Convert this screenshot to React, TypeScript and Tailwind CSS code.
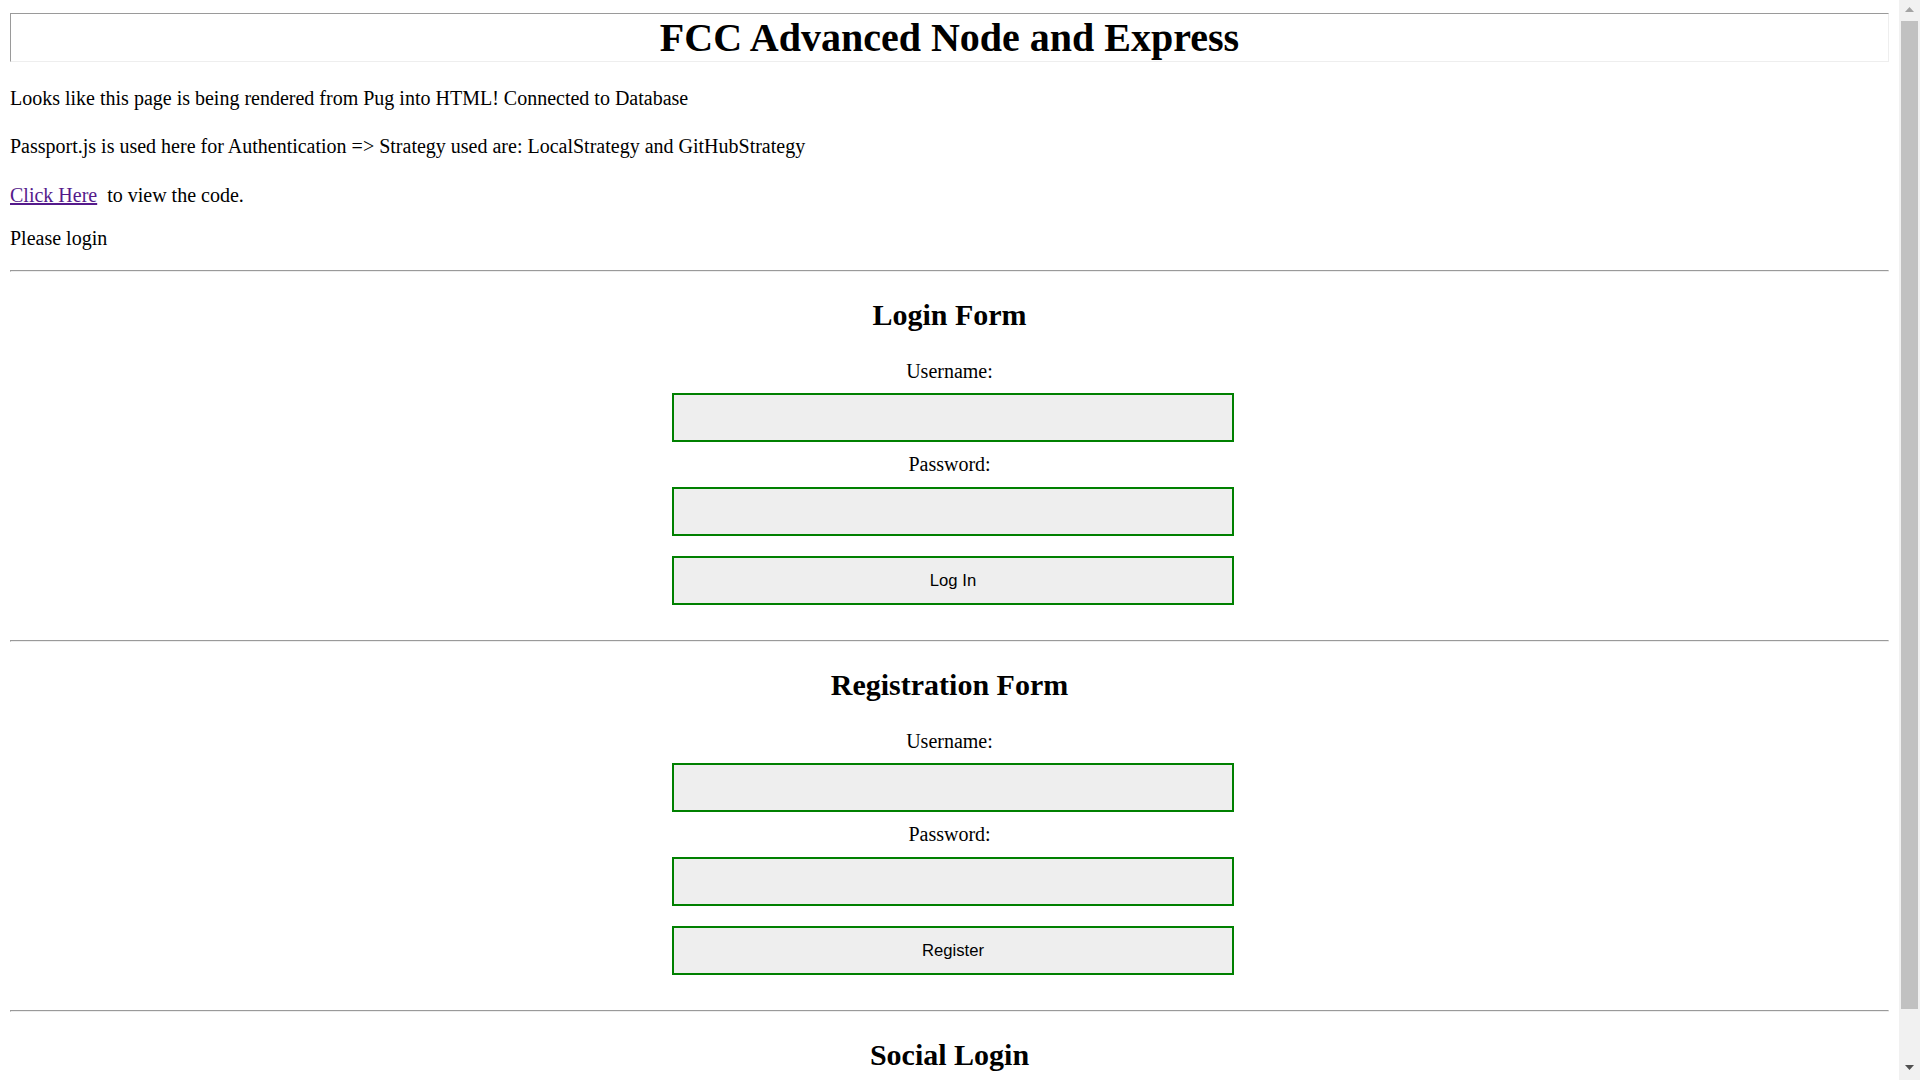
import React from "react";

const serif = "font-['Liberation_Serif','Times_New_Roman',serif]";

// gray "inset" rule like the browser default <hr>
function Rule() {
  return (
    <div className="h-[2px] border border-t-[#9a9a9a] border-l-[#9a9a9a] border-r-[#eeeeee] border-b-[#eeeeee]" />
  );
}

function Field({ label, type }: { label: string; type: string }) {
  return (
    <div className="flex justify-center pl-[7px]">
      <input
        type={type}
        aria-label={label}
        className="h-[49px] w-[562px] border-2 border-[#008000] bg-[#eeeeee] px-2 outline-none"
      />
    </div>
  );
}

function FormSection({ title, action }: { title: string; action: string }) {
  return (
    <section>
      <Rule />
      <h2 className="flex h-[86px] items-center justify-center pb-[2px] text-[30px] font-bold leading-[35px]">
        {title}
      </h2>
      <label className="flex h-[28px] items-center justify-center pb-[2px] leading-[23px]">
        Username:
      </label>
      <div className="mt-[7px]">
        <Field label="Username" type="text" />
      </div>
      <label className="flex h-[45px] items-center justify-center leading-[23px]">
        Password:
      </label>
      <Field label="Password" type="password" />
      <div className="mt-[20px] mb-[35px] flex justify-center pl-[7px]">
        <button className="h-[49px] w-[562px] border-2 border-[#008000] bg-[#eeeeee] font-['Liberation_Sans',Arial,sans-serif] text-[16.67px] text-black">
          {action}
        </button>
      </div>
    </section>
  );
}

// window scrollbar, drawn since the headless page has none
function Scrollbar() {
  return (
    <div className="flex w-[21px] shrink-0 flex-col bg-[#f1f1f1]">
      <div className="flex h-[21px] items-center justify-center pb-[2px]">
        <svg width="9" height="5" viewBox="0 0 9 5">
          <path d="M0 5 L4.5 0 L9 5 Z" fill="#a3a3a3" />
        </svg>
      </div>
      <div className="mx-[2px] h-[988px] bg-[#c1c1c1]" />
      <div className="flex-1" />
      <div className="flex h-[21px] items-center justify-center pb-[4px]">
        <svg width="9" height="5" viewBox="0 0 9 5">
          <path d="M0 0 L9 0 L4.5 5 Z" fill="#505050" />
        </svg>
      </div>
    </div>
  );
}

export default function App() {
  return (
    <div className="flex h-screen w-full overflow-hidden bg-white text-black">
      <main className={`min-w-0 flex-1 overflow-hidden px-[10px] pt-[13px] text-[20px] ${serif}`}>
        {/* title */}
        <h1 className="flex h-[49px] items-center justify-center border border-t-[#9a9a9a] border-l-[#9a9a9a] border-r-[#eeeeee] border-b-[#eeeeee] text-[40px] font-bold leading-[46px]">
          FCC Advanced Node and Express
        </h1>

        <p className="mt-[25px] leading-[23px]">
          Looks like this page is being rendered from Pug into HTML! Connected to Database
        </p>
        <p className="mt-[25px] leading-[23px]">
          Passport.js is used here for Authentication =&gt; Strategy used are: LocalStrategy and
          GitHubStrategy
        </p>
        <p className="mt-[26px] leading-[23px]">
          <a href="#" className="text-[#551a8b] underline">
            Click Here
          </a>
          {"\u00a0 "}to view the code.
        </p>
        <p className="mt-[20px] mb-[20px] leading-[23px]">Please login</p>

        <FormSection title="Login Form" action="Log In" />
        <FormSection title="Registration Form" action="Register" />

        <Rule />
        <h2 className="flex h-[86px] items-center justify-center pb-[2px] text-[30px] font-bold leading-[35px]">
          Social Login
        </h2>
      </main>
      <Scrollbar />
    </div>
  );
}
